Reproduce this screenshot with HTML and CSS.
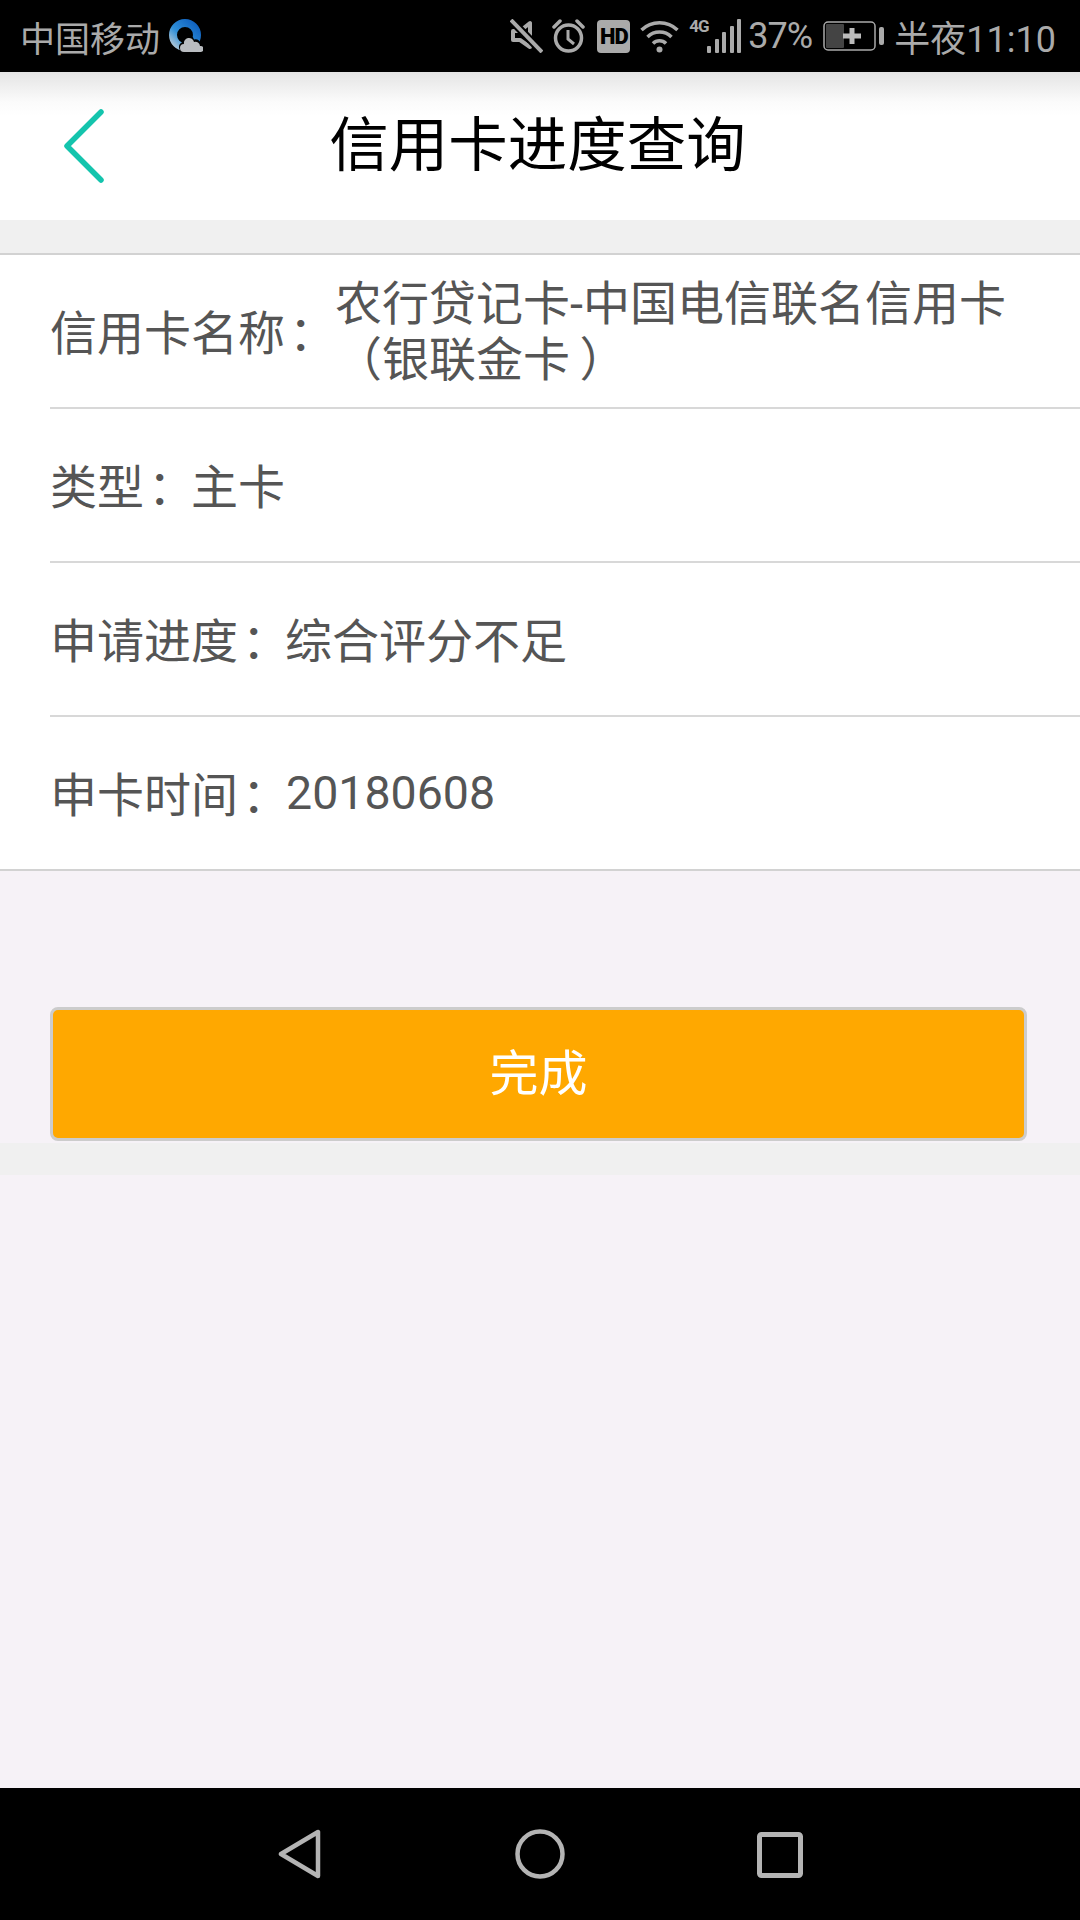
FILE: index.html
```html
<!DOCTYPE html>
<html lang="zh-CN">
<head>
  <meta charset="utf-8">
  <link rel="stylesheet" href="styles.css">
</head>
<body>
  <div class="statusbar">
    <div class="carrier">
      <span>中国移动</span>
      <svg class="cloud-logo" width="34" height="34" viewBox="0 0 34 34">
        <defs>
          <linearGradient id="ring" x1="1" y1="0" x2="0" y2="1">
            <stop offset="0" stop-color="#0d5fc0"/>
            <stop offset="0.6" stop-color="#2f8fd8"/>
            <stop offset="1" stop-color="#b5c8d6"/>
          </linearGradient>
        </defs>
        <circle cx="16" cy="16" r="12" fill="none" stroke="url(#ring)" stroke-width="8"/>
        <path d="M14 33a5 5 0 0 1 -1 -9.500a6 6 0 0 1 12 -3a5.500 5.500 0 0 1 7 5.500a3.500 3.500 0 0 1 0 7z" fill="#000"/>
        <path d="M15 33a4 4 0 0 1 0 -8a5 5 0 0 1 10 -2a4.500 4.500 0 0 1 6 4a3 3 0 0 1 1 6z" fill="#b9bcc0"/>
      </svg>
    </div>
    <div class="status-icons">
      <svg class="ic-mute" width="33" height="34" viewBox="0 0 33 34" fill="none" stroke="#aaa" stroke-width="4">
        <path d="M3 12h7l10 -8v24l-10 -7h-7z" stroke-linejoin="round"/>
        <path d="M1 1l31 32" stroke="#000" stroke-width="8"/>
        <path d="M1 1l31 32"/>
      </svg>
      <svg class="ic-alarm" width="33" height="34" viewBox="0 0 33 34" fill="none" stroke="#aaa" stroke-width="3.500">
        <circle cx="16.500" cy="19" r="13"/>
        <path d="M16 11v9l6 5" stroke-width="3"/>
        <path d="M2 8l6 -6M31 8l-6 -6" stroke-linecap="round"/>
      </svg>
      <span class="hd">HD</span>
      <svg class="ic-wifi" width="39" height="33" viewBox="0 0 39 33" fill="none" stroke="#aaa" stroke-width="3.500">
        <path d="M1.500 10a26 26 0 0 1 36 0"/>
        <path d="M7.500 17a17 17 0 0 1 24 0"/>
        <path d="M13 23.500a9 9 0 0 1 13 0"/>
        <circle cx="19.500" cy="29.500" r="3" fill="#aaa" stroke="none"/>
      </svg>
      <div class="net">
        <span class="net-label">4G</span>
        <div class="signal">
          <i class="bar-1"></i><i class="bar-2"></i><i class="bar-3"></i><i class="bar-4"></i><i class="bar-5"></i>
        </div>
      </div>
      <span class="percent">37%</span>
      <svg class="ic-battery" width="62" height="30" viewBox="0 0 62 30">
        <rect x="1" y="1" width="51" height="28" rx="4" fill="none" stroke="#aaa" stroke-width="1.500"/>
        <rect x="3" y="3" width="18" height="24" rx="1" fill="#444"/>
        <path d="M20 15h18M29 7v16" stroke="#bbb" stroke-width="5"/>
        <rect x="56" y="6" width="5" height="18" rx="2" fill="#aaa"/>
      </svg>
      <span class="clock">半夜11:10</span>
    </div>
  </div>

  <div class="header">
    <svg class="back" width="44" height="80" viewBox="0 0 44 80" fill="none" stroke="#14c4ad" stroke-width="5.500" stroke-linecap="round" stroke-linejoin="round">
      <path d="M39 5l-34 34 34 34"/>
    </svg>
    <div class="title">信用卡进度查询</div>
  </div>

  <div class="gap"></div>

  <div class="card">
    <div class="row">
      <div class="label">信用卡名称<span class="colon">：</span></div>
      <div class="value value-wrap">农行贷记卡-中国电信联名信用卡（银联金卡&thinsp;）</div>
    </div>
    <div class="row">
      <div class="label">类型<span class="colon">：</span></div>
      <div class="value">主卡</div>
    </div>
    <div class="row">
      <div class="label">申请进度<span class="colon">：</span></div>
      <div class="value">综合评分不足</div>
    </div>
    <div class="row">
      <div class="label">申卡时间<span class="colon">：</span></div>
      <div class="value value-date">20180608</div>
    </div>
  </div>

  <div class="action">
    <button class="btn-done">完成</button>
  </div>
  <div class="strip"></div>
  <div class="spacer"></div>

  <div class="navbar">
    <svg width="43" height="50" viewBox="0 0 43 50" fill="none" stroke="#b4b4b4" stroke-width="4.500" stroke-linejoin="round">
      <path d="M40 3v44l-37 -22z"/>
    </svg>
    <svg class="nav-home" width="50" height="50" viewBox="0 0 50 50" fill="none" stroke="#b4b4b4" stroke-width="4.500">
      <circle cx="25" cy="25" r="22.500"/>
    </svg>
    <svg class="nav-recent" width="46" height="46" viewBox="0 0 46 46" fill="none" stroke="#b4b4b4" stroke-width="5" stroke-linejoin="round">
      <rect x="2.500" y="2.500" width="41" height="41" rx="2"/>
    </svg>
  </div>
</body>
</html>
```

FILE: styles.css
```css
* {
  box-sizing: border-box;
}

body {
  margin: 0;
  width: 1080px;
  height: 1920px;
  display: flex;
  flex-direction: column;
  background-color: #f6f2f7;
  font-family: Roboto, "Noto Sans CJK SC", sans-serif;
}

.statusbar {
  height: 72px;
  flex-shrink: 0;
  background-color: #000;
  color: #aaa;
  display: flex;
  align-items: center;
  justify-content: space-between;
  padding: 0 24px 0 20px;
}

.carrier {
  display: flex;
  align-items: center;
  gap: 9px;
  font-size: 35px;
}

.status-icons {
  display: flex;
  align-items: center;
}

.ic-mute {
  margin-right: 9px;
}

.ic-alarm {
  margin-right: 12px;
}

.hd {
  width: 33px;
  height: 33px;
  margin-right: 10px;
  background-color: #aaa;
  border-radius: 4px;
  color: #000;
  font-size: 22px;
  font-weight: 900;
  line-height: 33px;
  text-align: center;
  letter-spacing: -1px;
}

.ic-wifi {
  margin-right: 10px;
}

.net {
  display: flex;
  align-items: flex-end;
  height: 34px;
  margin-right: 7px;
}

.net-label {
  width: 18px;
  align-self: flex-start;
  font-size: 17px;
  font-weight: 700;
  line-height: 15px;
  letter-spacing: -1px;
}

.signal {
  display: flex;
  align-items: flex-end;
  gap: 3.5px;
}

.signal i {
  display: block;
  width: 4px;
  background-color: #aaa;
  border-radius: 1px;
}

.bar-1 { height: 7px; }
.bar-2 { height: 14px; }
.bar-3 { height: 21px; }
.bar-4 { height: 27px; }
.bar-5 { height: 34px; }

.percent {
  width: 64px;
  font-size: 36px;
  margin-right: 11px;
  letter-spacing: -1px;
  white-space: nowrap;
}

.ic-battery {
  margin-right: 9px;
}

.clock {
  font-size: 36px;
}

.header {
  height: 148px;
  flex-shrink: 0;
  background: linear-gradient(to bottom, #e4e4e4 0, #fbfbfb 30px, #fff 44px);
  position: relative;
  display: flex;
  align-items: center;
  justify-content: center;
  padding: 0 5px 12px 0;
}

.back {
  position: absolute;
  left: 62px;
  top: 35px;
}

.title {
  font-size: 59.5px;
  color: #000;
}

.gap {
  height: 33px;
  flex-shrink: 0;
  background-color: #f0f0f0;
}

.card {
  background-color: #fff;
  border-top: 2px solid #d2d2d2;
  border-bottom: 2px solid #d2d2d2;
  padding-left: 50px;
}

.row {
  height: 154px;
  display: flex;
  align-items: center;
  font-size: 47px;
  color: #555;
  padding-bottom: 4px;
  border-bottom: 2px solid #d8d8d8;
}

.row:last-child {
  border-bottom: none;
  height: 152px;
}

.label {
  flex-shrink: 0;
  white-space: nowrap;
}

.colon {
  margin-left: 4px;
  letter-spacing: -4px;
}

.value-wrap {
  width: 700px;
  margin-left: 3px;
  margin-top: 6px;
  line-height: 56px;
}

.value-date {
  font-size: 46.5px;
  margin-top: 4px;
  margin-left: 1px;
}

.action {
  padding: 136px 53px 2px 50px;
}

.btn-done {
  display: block;
  width: 100%;
  height: 134px;
  padding: 0 0 10px;
  background-color: #ffa800;
  border: 3px solid #ccc;
  border-radius: 8px;
  color: #fff;
  font-family: inherit;
  font-size: 49px;
}

.strip {
  height: 32px;
  flex-shrink: 0;
  background-color: #f0f0f0;
}

.spacer {
  flex: 1;
}

.navbar {
  height: 132px;
  flex-shrink: 0;
  background-color: #000;
  display: flex;
  align-items: flex-start;
  justify-content: space-between;
  padding: 41px 277px 0 278px;
}

.nav-home {
  margin-left: 2px;
}

.nav-recent {
  margin-top: 3px;
}
```
